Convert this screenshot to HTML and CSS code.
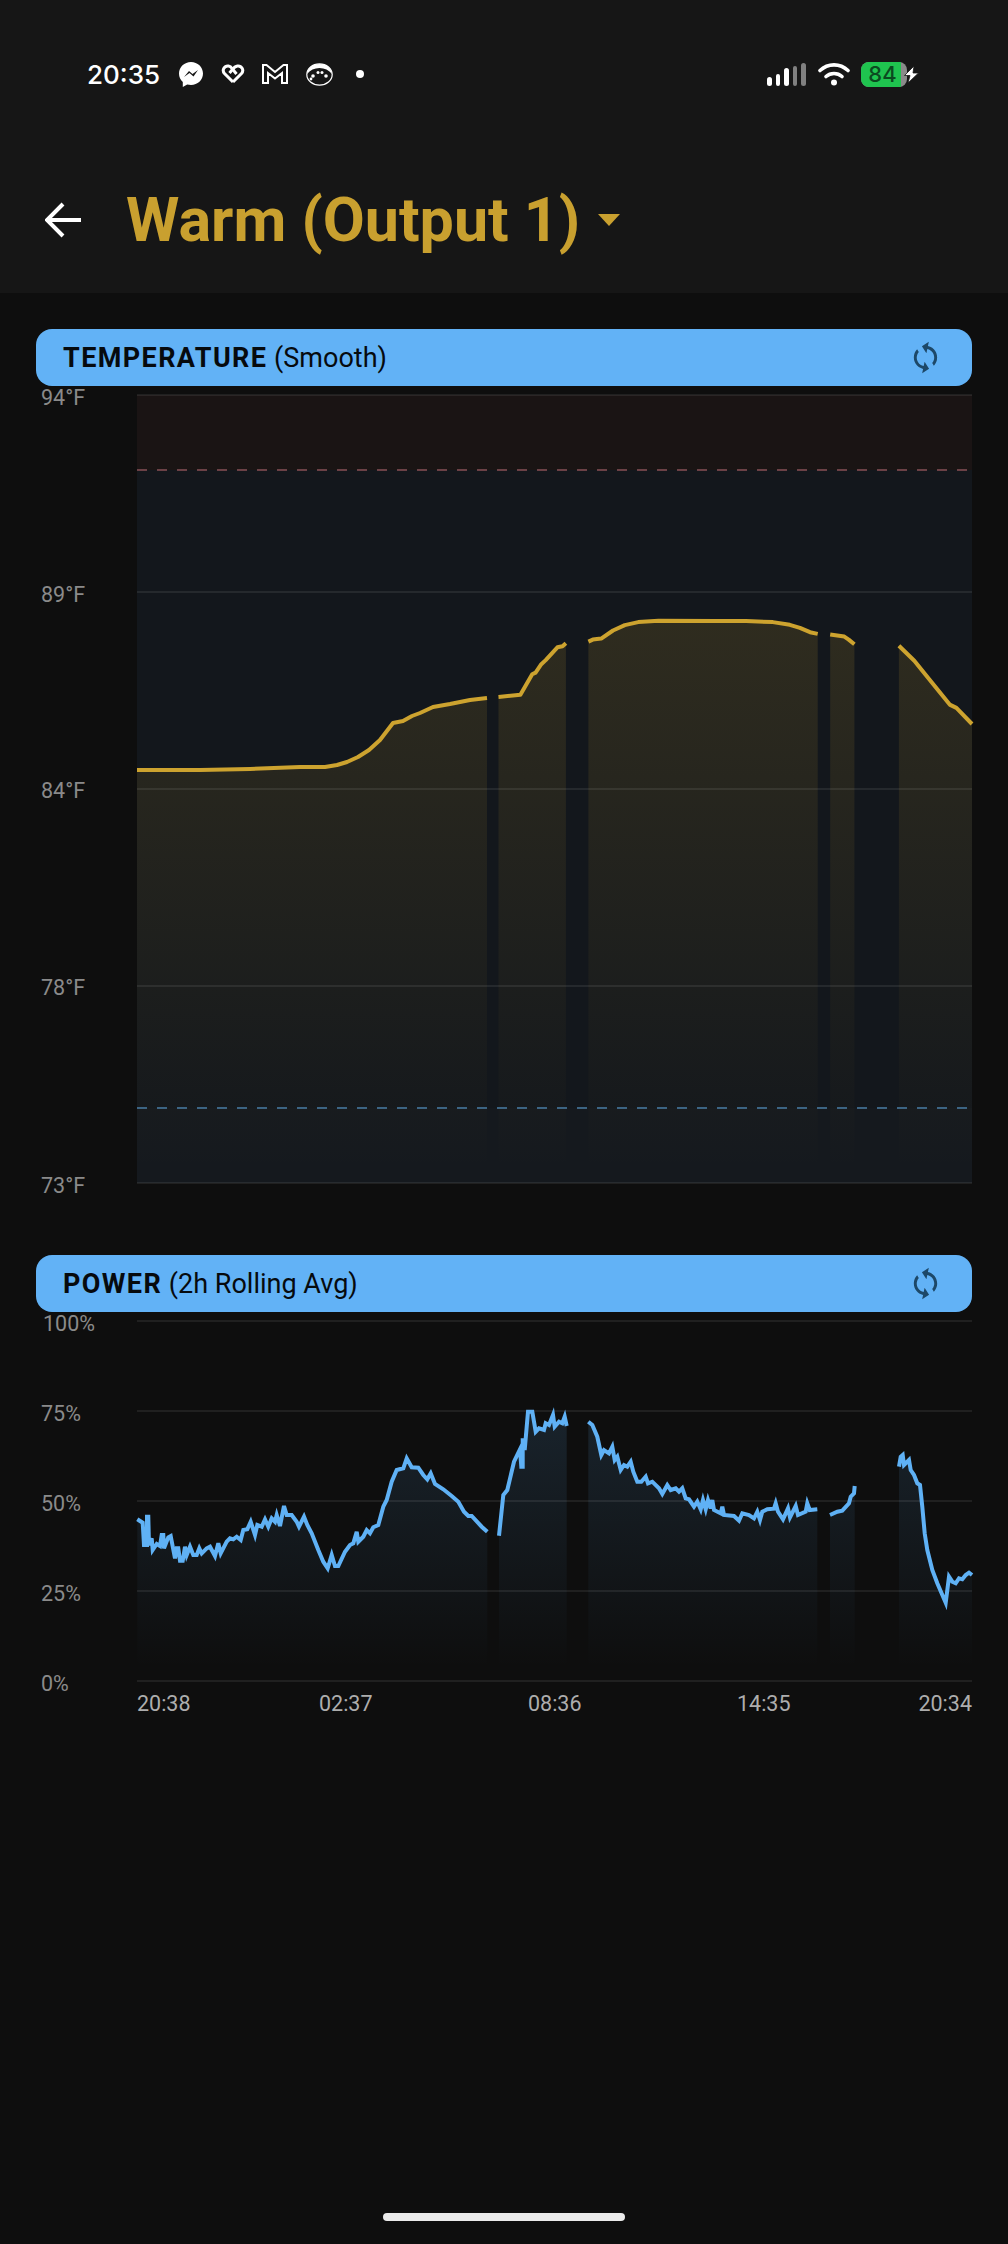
FILE: index.html
```html
<!DOCTYPE html>
<html lang="en">
  <head>
    <meta charset="UTF-8" />
    <meta name="viewport" content="width=device-width, initial-scale=1.0" />
    <title>Warm (Output 1)</title>
    <link rel="stylesheet" href="styles.css">
  </head>
  <body>
    <header class="header">
      <!-- Status Bar -->
      <div class="status-bar">
        <span class="clock">20:35</span>
        <div class="notifications">
          <svg class="icon-messenger" viewBox="0 0 24 25">
            <path class="white" d="M12 0C5.4 0 0 5 0 11.5c0 3.4 1.4 6.300 3.800 8.400V25l4.400-2.500c1.200.3 2.500.5 3.800.5 6.600 0 12-5 12-11.500S18.600 0 12 0z" />
            <path class="zigzag" d="M5 15l5-6 3.500 3 5.500-4-4.500 6.500L10.500 11z" />
          </svg>
          <svg class="icon-heart" viewBox="0 0 24 20">
            <path class="outline" d="M12 18L3.500 9.500C.5 6 3.500 1.500 7.500 2c1.500.2 2.800 1.300 3.500 2.500L15.500 10" />
            <path class="outline" d="M12 18l8.500-8.500c3-3.500 0-8-4-7.500-2.500.3-4 2-5.500 4L8.500 9" />
          </svg>
          <svg class="icon-gmail" viewBox="0 0 26 20">
            <path class="outline-thin" d="M1 1h3.500L13 8l8.500-7H25v18h-5V9l-7 5.500L6 9v10H1z" />
          </svg>
          <svg class="icon-sloth" viewBox="0 0 27 23">
            <ellipse class="outline-hair" cx="13.500" cy="11.500" rx="12.700" ry="10.700" />
            <path class="white" d="M1 11C2 4 7 1 13.500 1S25 4 26 11c-3-4-7.500-6-12.500-6S4 7 1 11z" />
            <circle class="white" cx="7" cy="13" r="1.800" />
            <circle class="white" cx="12" cy="9.500" r="1.500" />
            <circle class="white" cx="16" cy="9.500" r="1.500" />
            <circle class="white" cx="20" cy="13" r="1.800" />
            <circle class="white" cx="5" cy="16" r="1.400" />
          </svg>
          <span class="dot"></span>
        </div>

        <div class="system-icons">
          <div class="signal">
            <span class="bar bar-1"></span>
            <span class="bar bar-2"></span>
            <span class="bar bar-3"></span>
            <span class="bar bar-4 off"></span>
            <span class="bar bar-5 off"></span>
          </div>
          <svg class="icon-wifi" viewBox="0 0 32 24">
            <path class="wifi-arc" d="M2 8.500C10 1 22 1 30 8.500" />
            <path class="wifi-arc" d="M8 14.500C12.500 10.500 19.500 10.500 24 14.500" />
            <circle class="white" cx="16" cy="20.500" r="3" />
          </svg>
          <div class="battery">
            <span class="battery-level">84</span>
          </div>
          <svg class="icon-bolt" viewBox="0 0 17 19">
            <path class="bolt" d="M11 1L1.500 10.500H7L5 18l10.500-10H10z" />
          </svg>
        </div>
      </div>

      <!-- Title Row -->
      <div class="title-row">
        <svg class="icon-back" viewBox="0 0 36 36">
          <path d="M36 18H3M18 2L2 18l16 16" />
        </svg>
        <h1 class="title">Warm (Output 1)</h1>
        <span class="caret"></span>
      </div>
    </header>

    <main class="content">
      <!-- Temperature Chart -->
      <div class="chart-bar first">
        <span class="chart-name"><b>TEMPERATURE</b> (Smooth)</span>
        <svg class="icon-sync" viewBox="0 0 24 24">
          <path d="M12 4V1L8 5l4 4V6c3.310 0 6 2.690 6 6 0 1.010-.25 1.970-.7 2.800l1.460 1.460C19.540 15.030 20 13.570 20 12c0-4.420-3.580-8-8-8zm0 14c-3.310 0-6-2.690-6-6 0-1.010.25-1.970.7-2.800L5.240 7.740C4.460 8.970 4 10.430 4 12c0 4.420 3.580 8 8 8v3l4-4-4-4v3z" />
        </svg>
      </div>
      <svg class="chart chart-temp" viewBox="0 386 1008 869">
        <defs>
          <linearGradient id="tempGradient" gradientUnits="userSpaceOnUse" x1="0" y1="620" x2="0" y2="1170">
            <stop offset="0" stop-color="#cda32f" stop-opacity="0.15" />
            <stop offset="1" stop-color="#cda32f" stop-opacity="0" />
          </linearGradient>
        </defs>
        <rect class="zone-hot" x="137" y="395" width="835" height="75" />
        <rect class="zone-ok" x="137" y="470" width="835" height="638" />
        <rect class="zone-cold" x="137" y="1108" width="835" height="75" />
        <g id="tempFill"></g>
        <path class="grid" d="M137 395H972M137 592H972M137 789H972M137 986H972M137 1183H972" />
        <path class="limit-hot" d="M137 470H972" />
        <path class="limit-cold" d="M137 1108H972" />
        <g id="tempLine"></g>
        <text class="axis" x="41" y="405">94°F</text>
        <text class="axis" x="41" y="602">89°F</text>
        <text class="axis" x="41" y="798">84°F</text>
        <text class="axis" x="41" y="995">78°F</text>
        <text class="axis" x="41" y="1193">73°F</text>
      </svg>

      <!-- Power Chart -->
      <div class="chart-bar">
        <span class="chart-name"><b>POWER</b> (2h Rolling Avg)</span>
        <svg class="icon-sync" viewBox="0 0 24 24">
          <path d="M12 4V1L8 5l4 4V6c3.310 0 6 2.690 6 6 0 1.010-.25 1.970-.7 2.800l1.460 1.460C19.540 15.030 20 13.570 20 12c0-4.420-3.580-8-8-8zm0 14c-3.310 0-6-2.690-6-6 0-1.010.25-1.970.7-2.800L5.240 7.740C4.460 8.970 4 10.430 4 12c0 4.420 3.580 8 8 8v3l4-4-4-4v3z" />
        </svg>
      </div>
      <svg class="chart chart-power" viewBox="0 1312 1008 410">
        <defs>
          <linearGradient id="powerGradient" gradientUnits="userSpaceOnUse" x1="0" y1="1410" x2="0" y2="1668">
            <stop offset="0" stop-color="#62b2f6" stop-opacity="0.13" />
            <stop offset="1" stop-color="#62b2f6" stop-opacity="0" />
          </linearGradient>
        </defs>
        <g id="powerFill"></g>
        <path class="grid" d="M137 1321H972M137 1411H972M137 1501H972M137 1591H972M137 1681H972" />
        <g id="powerLine"></g>
        <text class="axis" x="43" y="1331">100%</text>
        <text class="axis" x="41" y="1421">75%</text>
        <text class="axis" x="41" y="1511">50%</text>
        <text class="axis" x="41" y="1601">25%</text>
        <text class="axis" x="41" y="1691">0%</text>
        <text class="axis time" x="137" y="1711">20:38</text>
        <text class="axis time" x="319" y="1711">02:37</text>
        <text class="axis time" x="528" y="1711">08:36</text>
        <text class="axis time" x="737" y="1711">14:35</text>
        <text class="axis time end" x="972" y="1711">20:34</text>
      </svg>
    </main>

    <div class="home-indicator"></div>

    <script src="chart.js"></script>
  </body>
</html>
```

FILE: styles.css
```css
/* Basic Styles */
body {
  font-family: Roboto, "Liberation Sans", sans-serif;
  margin: 0;
  padding: 0;
  height: 2244px;
  display: flex;
  flex-direction: column;
  background-color: #0e0e0e;
  overflow: hidden;
}

svg {
  display: block;
}

.white {
  fill: #fff;
}

/* Header */
.header {
  height: 293px;
  background-color: #161616;
}

.status-bar {
  display: flex;
  align-items: center;
  height: 32px;
  padding: 58px 88px 0 87px;
}

.clock {
  font-family: Inter, sans-serif;
  font-size: 26px;
  font-weight: 500;
  color: #fff;
}

.notifications {
  display: flex;
  align-items: center;
  gap: 17.5px;
  margin-left: 19px;
}

.icon-messenger {
  width: 24px;
  height: 25px;
}

.zigzag {
  fill: #161616;
}

.icon-heart {
  width: 24px;
  height: 20px;
}

.outline {
  fill: none;
  stroke: #fff;
  stroke-width: 3;
}

.icon-gmail {
  width: 26px;
  height: 20px;
}

.outline-thin {
  fill: none;
  stroke: #fff;
  stroke-width: 2;
}

.icon-sloth {
  width: 27px;
  height: 23px;
}

.outline-hair {
  fill: none;
  stroke: #fff;
  stroke-width: 1.2;
}

.dot {
  width: 8px;
  height: 8px;
  margin-left: 6px;
  border-radius: 50%;
  background-color: #fff;
}

.system-icons {
  display: flex;
  align-items: center;
  margin-left: auto;
}

.signal {
  display: flex;
  align-items: flex-end;
  gap: 4px;
  height: 23px;
}

.bar {
  width: 4.6px;
  border-radius: 3px;
  background-color: #fff;
}

.bar.off {
  background-color: #808080;
}

.bar-1 { height: 9px; }
.bar-2 { height: 12px; }
.bar-3 { height: 18px; }
.bar-4 { height: 20px; }
.bar-5 { height: 23px; }

.icon-wifi {
  width: 32px;
  height: 24px;
  margin-left: 12px;
}

.wifi-arc {
  fill: none;
  stroke: #fff;
  stroke-width: 3.6;
  stroke-linecap: round;
}

.battery {
  width: 46px;
  height: 25px;
  margin-left: 11px;
  border-radius: 8px;
  background-color: #8a8a8a;
  overflow: hidden;
}

.battery-level {
  display: block;
  width: 40px;
  height: 25px;
  line-height: 25px;
  padding-left: 3px;
  box-sizing: border-box;
  text-align: center;
  font-family: Inter, sans-serif;
  font-size: 22px;
  font-weight: 500;
  color: #0b4a20;
  background-color: #1fc44f;
}

.icon-bolt {
  width: 17px;
  height: 19px;
  margin-left: -4px;
}

.bolt {
  fill: #fff;
  stroke: #161616;
  stroke-width: 0.8;
}

.title-row {
  display: flex;
  align-items: center;
  height: 80px;
  margin-top: 90px;
  padding-left: 45px;
}

.icon-back {
  width: 36px;
  height: 36px;
}

.icon-back path {
  fill: none;
  stroke: #fff;
  stroke-width: 4;
}

.title {
  margin: 0 0 0 45px;
  font-size: 61px;
  font-weight: 700;
  color: #c9a02f;
}

.caret {
  width: 0;
  height: 0;
  margin-left: 18px;
  border-left: 11px solid transparent;
  border-right: 11px solid transparent;
  border-top: 12px solid #c9a02f;
}

/* Charts */
.content {
  flex: 1;
}

.chart-bar {
  display: flex;
  align-items: center;
  justify-content: space-between;
  height: 57px;
  margin: 0 36px;
  padding: 0 27px;
  border-radius: 16px;
  background-color: #62b2f6;
}

.chart-bar.first {
  margin-top: 36px;
}

.chart-name {
  font-size: 27px;
  color: #060a0e;
}

.chart-name b {
  letter-spacing: 1.4px;
}

.icon-sync {
  width: 35px;
  height: 35px;
  margin-right: 2px;
  transform: rotate(12deg);
}

.icon-sync path {
  fill: #1d4868;
}

.chart {
  width: 1008px;
}

.chart-temp {
  height: 869px;
}

.chart-power {
  height: 410px;
}

.zone-hot {
  fill: #1a1414;
}

.zone-ok {
  fill: #13171c;
}

.zone-cold {
  fill: #15191e;
}

.grid {
  fill: none;
  stroke: rgba(255, 255, 255, 0.08);
  stroke-width: 2;
}

.limit-hot {
  stroke: #6b4146;
  stroke-width: 2;
  stroke-dasharray: 10 10;
}

.limit-cold {
  stroke: #3c6483;
  stroke-width: 2;
  stroke-dasharray: 10 10;
}

.fill-temp {
  fill: url(#tempGradient);
}

.fill-power {
  fill: url(#powerGradient);
}

.line-temp {
  fill: none;
  stroke: #cda32f;
  stroke-width: 4;
  stroke-linejoin: round;
}

.line-power {
  fill: none;
  stroke: #5fb1f5;
  stroke-width: 4;
  stroke-linejoin: miter;
}

.axis {
  font-size: 21.5px;
  fill: #8a8a8a;
}

.axis.time {
  fill: #adadad;
}

.axis.end {
  text-anchor: end;
}

.home-indicator {
  width: 242px;
  height: 8px;
  margin: 0 auto 23px;
  border-radius: 4px;
  background-color: #ebebeb;
}
```

FILE: chart.js
```js
// Data Dummy (x,y pairs in page pixels, each string is one run between gaps)
const temperature = [
  '137,770 200,770 250,769 300,767 325,767 337,765 347,762 358,757 369,750 380,740 393,723 403,721 412,716 420,713 433,707 450,704 470,700 487,698',
  '498.5,697 520.4,694.8 532.2,674.3 535.6,672.6 541.3,664.2 545.7,660.1 557.4,647.3 562.5,646.3 565.9,643.3',
  '588.4,641.6 592.8,639.6 601.2,638.6 613,630.5 624.8,625.1 638.2,622.1 658.5,620.7 715.7,621 746,621 772.9,622.1 789.8,624.8 799.9,627.8 810,632.2 817.7,633.9',
  '830.2,634.5 844.3,636.6 848.7,639.6 854.4,644.3',
  '898.9,645.7 914.3,660.8 927.8,677.6 949.7,704.6 956.4,707.9 972,724',
]

// Power was read off at 3x, so these are divided by 3 below
const powerLeft = [
  '412,838 428,848 432,915 441,915 441,830 445,830 447,915 455,895 458,930 470,912 480,918 485,885 490,885 492,925 505,892 512,888 525,955 530,925 535,925 540,962 548,962 555,920 560,945 570,920 580,945 590,945 598,925 605,940 620,925 630,920 645,948 655,910 662,940 680,905 690,895 700,898 710,890 722,900 730,870 742,868 752,845 765,885 772,855 785,860 795,838 805,860 815,835 825,845 830,825 840,858 852,798 860,825 875,825 890,845 897,860 912,830 922,855 935,880 955,930 970,965 983,985 995,945 1005,978 1015,978 1035,935 1050,915 1060,910 1070,875 1075,905 1090,890 1100,870 1110,880 1120,862 1135,855 1150,800 1160,780 1175,725 1190,690 1210,685 1220,655 1235,682 1255,683 1270,705 1282,718 1292,700 1305,732 1330,748 1355,768 1375,785 1392,815 1405,828 1415,828 1445,860 1462,875',
]
const powerRight = [
  '-15,887 -2,765 10,750 30,665 48,628 52,680 56,680 56,595 62,630 72,515 85,515 95,575 105,565 120,570 125,550 135,555 147,525 152,560 165,545 175,550 182,530 188,558',
  '253,545 265,555 280,590 292,645 300,630 315,640 325,620 332,660 340,650 350,690 360,675 370,680 380,665 388,695 400,725 412,725 425,710 432,730 445,725 465,745 475,762 490,735 500,750 515,745 525,755 535,745 545,775 555,778 570,800 580,785 590,808 597,780 605,808 612,780 620,805 625,780 630,810 650,820 655,800 660,825 690,828 705,842 715,820 735,825 750,835 760,815 768,840 775,815 790,808 810,806 815,790 822,815 837,838 852,805 858,832 875,798 882,825 905,815 910,790 917,810 940,808',
  '978,825 1000,815 1015,812 1035,790 1040,770 1050,760 1052,738',
  '1185,680 1190,650 1196,645 1200,675 1215,660 1220,690 1230,705 1240,730 1248,735 1255,800 1262,880 1270,930 1285,990 1300,1030 1325,1088 1335,1010 1345,1025 1355,1030 1365,1015 1375,1018 1385,1005 1395,998 1404,1005',
]

const svgNS = 'http://www.w3.org/2000/svg'

function parseRun(run, originX, originY, scale) {
  return run.split(' ').map((pair) => {
    const [x, y] = pair.split(',').map(Number)
    return [originX + x * scale, originY + y * scale]
  })
}

function addPath(parentId, className, d) {
  const path = document.createElementNS(svgNS, 'path')
  path.setAttribute('class', className)
  path.setAttribute('d', d)
  document.getElementById(parentId).appendChild(path)
}

// Function to Render one run as an area plus its line
function renderRun(points, name, baseline) {
  const line = 'M' + points.map((p) => p[0].toFixed(1) + ' ' + p[1].toFixed(1)).join('L')
  const first = points[0][0].toFixed(1)
  const last = points[points.length - 1][0].toFixed(1)
  addPath(name + 'Fill', 'fill-' + name, `${line}L${last} ${baseline}L${first} ${baseline}Z`)
  addPath(name + 'Line', 'line-' + name, line)
}

// Initial Rendering
temperature.forEach((run) => renderRun(parseRun(run, 0, 0, 1), 'temp', 1183))
powerLeft.forEach((run) => renderRun(parseRun(run, 0, 1240, 1 / 3), 'power', 1681))
powerRight.forEach((run) => renderRun(parseRun(run, 504, 1240, 1 / 3), 'power', 1681))
```
